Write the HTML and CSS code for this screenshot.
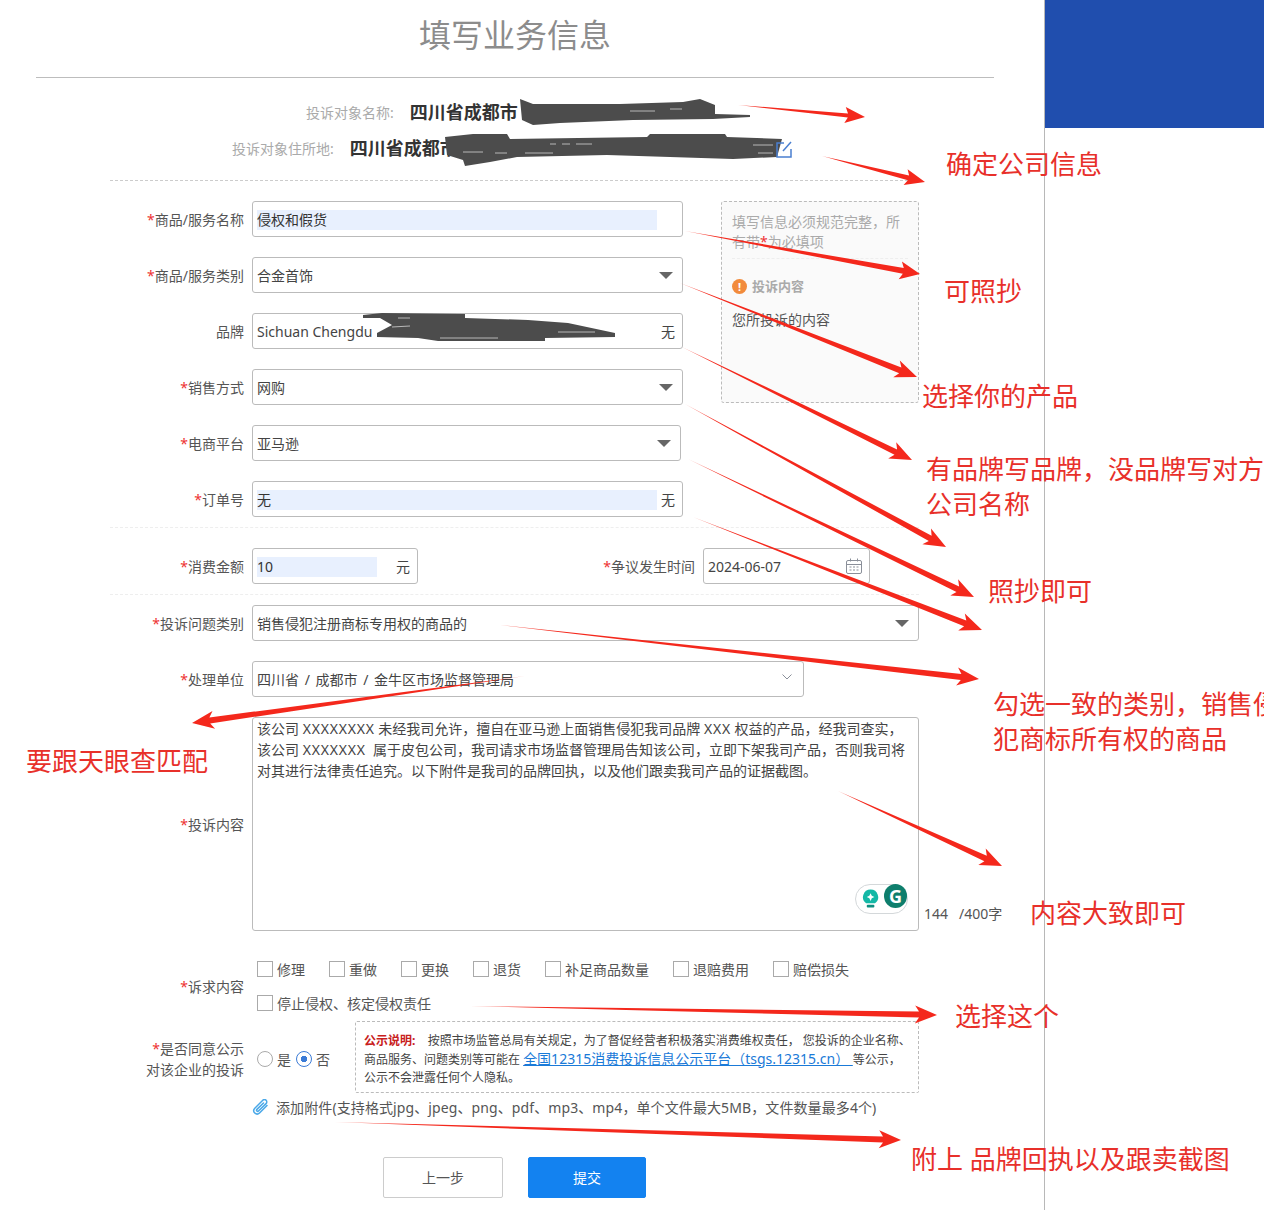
FILE: index.html
```html
<!DOCTYPE html>
<html>
<head>
    <title>填写业务信息</title>
    <link rel="stylesheet" href="styles.css">
</head>
<body>
<div class="page">
    <div class="main">
        <h1 class="title">填写业务信息</h1>

        <div class="info">
            <div class="info-row info-name">
                <span class="info-label">投诉对象名称:</span>
                <span class="info-value">四川省成都市</span>
            </div>
            <div class="info-row info-addr">
                <span class="info-label">投诉对象住所地:</span>
                <span class="info-value">四川省成都市</span>
            </div>
        </div>

        <div class="form">
            <div class="top-part">
                <div class="fields">
                    <div class="row">
                        <div class="label"><i>*</i>商品/服务名称</div>
                        <div class="box"><span class="fill fill-name">侵权和假货</span></div>
                    </div>
                    <div class="row">
                        <div class="label"><i>*</i>商品/服务类别</div>
                        <div class="box box-select"><span>合金首饰</span><b class="caret"></b></div>
                    </div>
                    <div class="row">
                        <div class="label">品牌</div>
                        <div class="box box-select"><span>Sichuan Chengdu</span><span>无</span></div>
                    </div>
                    <div class="row">
                        <div class="label"><i>*</i>销售方式</div>
                        <div class="box box-select"><span>网购</span><b class="caret"></b></div>
                    </div>
                    <div class="row">
                        <div class="label"><i>*</i>电商平台</div>
                        <div class="box box-select box-narrow"><span>亚马逊</span><b class="caret"></b></div>
                    </div>
                    <div class="row">
                        <div class="label"><i>*</i>订单号</div>
                        <div class="box box-select"><span class="fill fill-name">无</span><span>无</span></div>
                    </div>
                </div>
                <div class="tip">
                    <div class="tip-head">填写信息必须规范完整，所有带<i>*</i>为必填项</div>
                    <div class="tip-title">
                        <span class="tip-icon">!</span>投诉内容
                    </div>
                    <div class="tip-text">您所投诉的内容</div>
                </div>
            </div>

            <div class="row row-split">
                <div class="row-left">
                    <div class="label"><i>*</i>消费金额</div>
                    <div class="box box-select box-money"><span class="fill fill-money">10</span><span>元</span></div>
                </div>
                <div class="row-left">
                    <div class="label label-date"><i>*</i>争议发生时间</div>
                    <div class="box box-select box-date">
                        <span>2024-06-07</span>
                        <svg width="16" height="16" viewBox="0 0 16 16" fill="none" stroke="#8a8f99">
                            <rect x="0.5" y="2.5" width="15" height="13" rx="1.5"/>
                            <path d="M0.5 6.5h15M4.5 0.5v3M11.5 0.5v3"/>
                            <path d="M3.5 9h2M7 9h2M10.5 9h2M3.5 12h2M7 12h2M10.5 12h2"/>
                        </svg>
                    </div>
                </div>
            </div>

            <div class="row row-type">
                <div class="label"><i>*</i>投诉问题类别</div>
                <div class="box box-select box-wide"><span>销售侵犯注册商标专用权的商品的</span><b class="caret"></b></div>
            </div>
            <div class="row">
                <div class="label"><i>*</i>处理单位</div>
                <div class="box box-select box-unit">
                    <span class="path-text">四川省 / 成都市 / 金牛区市场监督管理局</span>
                    <svg width="10" height="6" viewBox="0 0 10 6" fill="none" stroke="#8a8f99"><path d="M0.5 0.5L5 5L9.5 0.5"/></svg>
                </div>
            </div>
            <div class="row row-content">
                <div class="label"><i>*</i>投诉内容</div>
                <div class="textarea">该公司 <span class="xx">XXXXXXXX</span> 未经我司允许，擅自在亚马逊上面销售侵犯我司品牌 <span class="xx">XXX</span> 权益的产品，经我司查实，<br>该公司 <span class="xx">XXXXXXX</span>&nbsp; 属于皮包公司，我司请求市场监督管理局告知该公司，立即下架我司产品，否则我司将<br>对其进行法律责任追究。以下附件是我司的品牌回执，以及他们跟卖我司产品的证据截图。
                    <div class="grammarly">
                        <svg width="18" height="22" viewBox="0 0 18 22">
                            <path d="M9 1a8 8 0 0 1 4.6 14.500H4.400A8 8 0 0 1 9 1z" fill="#14b8a6"/>
                            <path d="M9 5l1.300 2.700L13 9l-2.700 1.300L9 13l-1.300-2.700L5 9l2.700-1.300z" fill="#fff"/>
                            <rect x="5" y="17" width="8" height="3" rx="1" fill="#0f8f80"/>
                        </svg>
                        <span class="g-badge">G</span>
                    </div>
                </div>
                <div class="counter">144 &nbsp; /400字</div>
            </div>

            <div class="row row-claims">
                <div class="label"><i>*</i>诉求内容</div>
                <div class="claims">
                    <span class="check"><b></b>修理</span>
                    <span class="check"><b></b>重做</span>
                    <span class="check"><b></b>更换</span>
                    <span class="check"><b></b>退货</span>
                    <span class="check"><b></b>补足商品数量</span>
                    <span class="check"><b></b>退赔费用</span>
                    <span class="check"><b></b>赔偿损失</span>
                    <span class="check"><b></b>停止侵权、核定侵权责任</span>
                </div>
            </div>

            <div class="row row-public">
                <div class="label label-two"><i>*</i>是否同意公示<br>对该企业的投诉</div>
                <div class="radios">
                    <span class="radio"><b></b>是</span>
                    <span class="radio on"><b></b>否</span>
                </div>
                <div class="notice">
                    <strong>公示说明:</strong>&nbsp;&nbsp; 按照市场监管总局有关规定，为了督促经营者积极落实消费维权责任， 您投诉的企业名称、<br>商品服务、问题类别等可能在 <a href="#">全国12315消费投诉信息公示平台（tsgs.12315.cn）&nbsp;</a>等公示，<br>公示不会泄露任何个人隐私。
                </div>
            </div>

            <div class="attach">
                <svg width="17" height="17" viewBox="0 0 17 17" fill="none" stroke="#4aa8e8" stroke-width="1.500" stroke-linecap="round">
                    <path d="M15 6.500L7.500 14a3.300 3.300 0 0 1-4.700-4.700l8-8a2.300 2.300 0 0 1 3.300 3.300L6.500 12a1.100 1.100 0 0 1-1.600-1.600L11.500 4"/>
                </svg>
                添加附件(支持格式jpg、jpeg、png、pdf、mp3、mp4，单个文件最大5MB，文件数量最多4个)
            </div>

            <div class="buttons">
                <a class="btn" href="#">上一步</a>
                <a class="btn btn-primary" href="#">提交</a>
            </div>
        </div>
    </div>
    <div class="side">
        <div class="side-top"></div>
    </div>

    <!-- scribbles and arrows drawn over the screenshot -->
    <svg class="marks" width="1264" height="1210" viewBox="0 0 1264 1210">
        <defs>
            <linearGradient id="fadeRight" x1="0" x2="1" y1="0" y2="0">
                <stop offset="0" stop-color="#f4281c" stop-opacity="0.6"/>
                <stop offset="0.12" stop-color="#f4281c"/>
            </linearGradient>
            <linearGradient id="fadeLeft" x1="1" x2="0" y1="0" y2="0">
                <stop offset="0" stop-color="#f4281c" stop-opacity="0.6"/>
                <stop offset="0.12" stop-color="#f4281c"/>
            </linearGradient>
        </defs>
        <g fill="#4c4c4c">
            <polygon points="520,99 533,104 620,104 683,102 700,99 715,105 715,114 750,115 750,117 713,119 633,120 560,123 533,125 522,120"/>
            <polygon points="445,137 473,134 507,134 510,139 647,137 650,134 725,134 727,137 782,139 777,157 733,159 607,155 517,157 490,162 465,166 463,160 447,155"/>
            <polygon points="363,315 382,313 465,314 465,318 528,320 568,323 615,333 615,337 545,338 545,341 438,341 418,338 377,337 377,333 392,325 380,318 363,318"/>
        </g>
        <g fill="none" stroke="#fff" stroke-width="1" opacity="0.6">
            <path d="M550 144h6M562 144h8M576 144h16M463 152h20M495 153h12M525 153h28"/>
            <path d="M753 145h20M758 153h15M630 111h25M670 109h12"/>
            <path d="M398 318h12M392 327l18-1M440 338h58M558 332h37"/>
        </g>
        <g fill="url(#fadeRight)">
            <polygon points="738,105 848,113.400 845.800,107 865,117 844.300,123 847.800,117.400"/>
            <polygon points="822,156 909.100,175.400 907.600,169.300 925,182 903.600,184.900 907.900,180.200"/>
            <polygon points="685,231 903.800,268 901.900,261.600 920,274 898.700,279.200 902.800,273.800"/>
            <polygon points="680,283 901.400,367.600 899.800,360.500 917,377 893.200,377.300 899.200,373.200"/>
            <polygon points="682,347 897.100,449.400 896.200,442.200 912,460 888.200,458.400 894.500,454.800"/>
            <polygon points="685,404 931.600,535.800 931,528.500 946,547 922.400,544.300 928.800,541"/>
            <polygon points="688,459 959.100,586.500 958.100,579.300 974,597 950.300,595.500 956.500,591.900"/>
            <polygon points="693,517 966.300,620.600 964.800,613.600 982,630 958.200,630.400 964.100,626.200"/>
            <polygon points="500,625 961.400,674 958.100,667.500 979,679 956.100,685.500 960.800,680"/>
            <polygon points="838,791 986.800,855.800 985.700,848.600 1002,866 978.300,865 984.400,861.200"/>
            <polygon points="470,1006 919,1011.600 915.200,1005.600 937,1015 914.800,1023.500 919,1017.600"/>
            <polygon points="335,1122 883,1136.400 879.300,1130.300 901,1140 878.700,1148.300 883,1142.400"/>
        </g>
        <polygon fill="url(#fadeLeft)" points="525,676 209.400,717.500 212.500,711 192,723 215.100,728.800 210.200,723.500"/>
        <g fill="none" stroke="#4a7fd0" stroke-width="1.500">
            <path d="M784 143h-7v14h14v-8"/>
            <path d="M783 151l8-9"/>
        </g>
    </svg>

    <div class="note note-company">确定公司信息</div>
    <div class="note note-copy">可照抄</div>
    <div class="note note-product">选择你的产品</div>
    <div class="note note-brand">有品牌写品牌，没品牌写对方<br>公司名称</div>
    <div class="note note-same">照抄即可</div>
    <div class="note note-type">勾选一致的类别，销售侵<br>犯商标所有权的商品</div>
    <div class="note note-match">要跟天眼查匹配</div>
    <div class="note note-rough">内容大致即可</div>
    <div class="note note-pick">选择这个</div>
    <div class="note note-attach">附上 品牌回执以及跟卖截图</div>
</div>
</body>
</html>
```

FILE: styles.css
```css
* {
    box-sizing: border-box;
}

html, body {
    margin: 0;
    padding: 0;
}

body {
    font-family: "Noto Sans", "Noto Sans CJK SC", sans-serif;
    font-size: 14px;
    color: #444;
    background: #fff;
}

.page {
    position: relative;
    display: flex;
    width: 1264px;
    height: 1210px;
    overflow: hidden;
}

.main {
    width: 1045px;
    flex: none;
    border-right: 1px solid #b8b8b8;
}

.side {
    flex: 1;
}

.side-top {
    height: 128px;
    background: #204eae;
}

.title {
    height: 78px;
    margin: 0 50px 0 36px;
    border-bottom: 1px solid #bdbdbd;
    font-size: 32px;
    font-weight: 400;
    line-height: 70px;
    text-align: center;
    color: #8c8c8c;
}

/* company info */
.info {
    width: 808px;
    height: 103px;
    margin-left: 110px;
    padding-top: 16px;
    border-bottom: 1px dashed #ccc;
}

.info-row {
    display: flex;
    align-items: center;
    height: 36px;
}

.info-name {
    padding-left: 196px;
    gap: 16px;
}

.info-addr {
    padding-left: 122px;
    gap: 16px;
}

.info-label {
    font-size: 14px;
    color: #aaa;
}

.info-value {
    margin-bottom: 2px;
    font-size: 18px;
    font-weight: 700;
    color: #333;
}

/* form */
.form {
    width: 809px;
    margin-left: 110px;
    padding-top: 20px;
}

.top-part {
    display: flex;
    height: 327px;
    border-bottom: 1px dashed #eee;
}

.fields {
    width: 573px;
}

.row {
    display: flex;
    align-items: center;
    margin-bottom: 20px;
}

.label {
    width: 134px;
    margin-right: 8px;
    flex: none;
    text-align: right;
    font-size: 14px;
    line-height: 21px;
    color: #555;
}

.label i, .tip-head i {
    font-style: normal;
    color: #e33;
}

.box {
    display: flex;
    align-items: center;
    width: 431px;
    height: 36px;
    padding: 0 4px;
    border: 1px solid #bbb;
    border-radius: 3px;
    background: #fff;
}

.box-select {
    justify-content: space-between;
    padding-right: 7px;
}

.box-narrow {
    width: 429px;
}

.box-wide {
    width: 667px;
}

.box-unit {
    width: 552px;
    padding-right: 11px;
}

.box-unit svg {
    margin-bottom: 4px;
}

.path-text {
    word-spacing: 2px;
}

.box-money {
    width: 166px;
}

.box-date {
    width: 167px;
}

.fill {
    display: block;
    height: 20px;
    margin-top: 2px;
    line-height: 20px;
    background: #e8f0fe;
    color: #333;
}

.fill-name {
    width: 400px;
}

.fill-money {
    width: 120px;
}

.caret {
    width: 0;
    height: 0;
    margin-right: 2px;
    border-left: 7px solid transparent;
    border-right: 7px solid transparent;
    border-top: 7px solid #666;
}

.tip {
    width: 198px;
    height: 202px;
    margin-left: 38px;
    padding: 10px;
    border: 1px dashed #bbb;
    border-radius: 3px;
    background: #fafafa;
    color: #aaa;
    font-size: 14px;
    line-height: 20px;
}

.tip-head {
    padding-bottom: 6px;
    border-bottom: 1px dashed #eee;
}

.tip-title {
    display: flex;
    align-items: center;
    gap: 5px;
    margin-top: 17px;
    font-size: 13px;
    font-weight: 700;
}

.tip-icon {
    width: 15px;
    height: 15px;
    border-radius: 50%;
    background: #f28b3c;
    color: #fff;
    font-size: 11px;
    line-height: 15px;
    text-align: center;
}

.tip-text {
    margin-top: 14px;
    color: #555;
}

.row-split {
    height: 67px;
    padding: 20px 0 10px;
    margin-bottom: 0;
    border-bottom: 1px dashed #eee;
}

.row-left {
    display: flex;
    align-items: center;
}

.label-date {
    width: 277px;
}

.row-type {
    margin-top: 10px;
}

.row-content {
    position: relative;
    width: 900px;
    margin-bottom: 28px;
}

.textarea {
    position: relative;
    width: 667px;
    height: 214px;
    padding: 0 4px;
    border: 1px solid #bbb;
    border-radius: 3px;
    font-size: 14px;
    line-height: 21px;
    white-space: nowrap;
}

.xx {
    letter-spacing: 0.8px;
}

.grammarly {
    position: absolute;
    right: 10px;
    bottom: 16px;
    display: flex;
    align-items: center;
    gap: 5px;
    width: 53px;
    height: 30px;
    padding-left: 6px;
    border: 1px solid #d4d8da;
    border-radius: 15px;
    background: #fff;
}

.g-badge {
    width: 24px;
    height: 24px;
    margin-top: -6px;
    border-radius: 50%;
    background: #0e7e6c;
    color: #fff;
    font-size: 18px;
    font-weight: 700;
    line-height: 24px;
    text-align: center;
}

.counter {
    position: absolute;
    left: 814px;
    bottom: 8px;
    white-space: nowrap;
    font-size: 14px;
    color: #555;
}

.row-claims {
    margin-bottom: 0;
}

.claims {
    display: flex;
    flex-wrap: wrap;
    column-gap: 24px;
    row-gap: 14px;
    width: 667px;
    padding-left: 5px;
}

.check, .radio {
    display: flex;
    align-items: center;
    gap: 4px;
    height: 20px;
    font-size: 14px;
    color: #555;
}

.check b {
    width: 16px;
    height: 16px;
    border: 1px solid #aaa;
}

.row-public {
    height: 72px;
    margin-top: 8px;
    margin-bottom: 0;
}

.label-two {
    margin-top: 3px;
}

.radios {
    display: flex;
    gap: 5px;
    width: 103px;
    margin-top: 4px;
    padding-left: 5px;
}

.radio b {
    width: 16px;
    height: 16px;
    border: 1px solid #aaa;
    border-radius: 50%;
}

.radio.on b {
    border-color: #3b7bd6;
    background: radial-gradient(circle, #3b7bd6 0 3px, #fff 3.500px);
}

.notice {
    width: 564px;
    height: 72px;
    padding: 10px 8px;
    border: 1px dashed #bbb;
    border-radius: 2px;
    font-size: 12px;
    line-height: 18.500px;
    color: #444;
    white-space: nowrap;
}

.notice strong {
    margin-right: 3px;
    color: #c8201c;
}

.notice a {
    font-size: 14px;
    line-height: 1;
    color: #1a7ad8;
}

.attach {
    display: flex;
    align-items: center;
    gap: 7px;
    margin: 4px 0 0 142px;
    height: 20px;
    font-size: 14px;
    letter-spacing: 0.1px;
    color: #555;
    white-space: nowrap;
}

.buttons {
    display: flex;
    gap: 25px;
    margin: 40px 0 0 273px;
}

.btn {
    width: 120px;
    height: 41px;
    border: 1px solid #ccc;
    border-radius: 2px;
    line-height: 39px;
    text-align: center;
    font-size: 14px;
    color: #555;
    text-decoration: none;
}

.btn-primary {
    width: 118px;
    border-color: #1382f0;
    background: #1382f0;
    color: #fff;
}

/* annotations on top of the screenshot */
.marks {
    position: absolute;
    left: 0;
    top: 0;
    pointer-events: none;
}

.note {
    position: absolute;
    font-size: 26px;
    line-height: 35px;
    color: #e8302a;
    white-space: nowrap;
}

.note-company { left: 946px; top: 147px; }
.note-copy { left: 944px; top: 274px; }
.note-product { left: 922px; top: 379px; }
.note-brand { left: 926px; top: 452px; }
.note-same { left: 988px; top: 574px; }
.note-type { left: 993px; top: 687px; }
.note-match { left: 26px; top: 744px; }
.note-rough { left: 1030px; top: 896px; }
.note-pick { left: 955px; top: 999px; }
.note-attach { left: 911px; top: 1142px; }
```
